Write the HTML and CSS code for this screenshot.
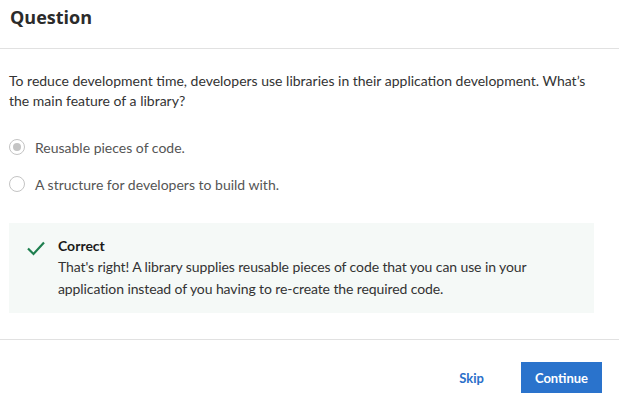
FILE: index.html
```html
<!DOCTYPE html>
<html>
<head>
<meta charset="utf-8">
<link rel="stylesheet" href="styles.css">
</head>
<body>
<div class="dialog">
  <header class="head"><h1 class="title">Question</h1></header>
  <main class="body">
    <p class="prompt">To reduce development time, developers use libraries in their application development. What’s the main feature of a library?</p>
    <div class="options">
      <label class="option selected"><span class="radio"><span class="dot"></span></span><span class="opt-text">Reusable pieces of code.</span></label>
      <label class="option"><span class="radio"></span><span class="opt-text">A structure for developers to build with.</span></label>
    </div>
    <div class="feedback">
      <svg class="check" width="18" height="15" viewBox="0 0 18 15"><path d="M1 7.5 L6.5 13 L17 1.5" fill="none" stroke="#1e7f4f" stroke-width="2.2"/></svg>
      <div class="fb-text">
        <div class="fb-title">Correct</div>
        <div class="fb-body">That's right! A library supplies reusable pieces of code that you can use in your application instead of you having to re-create the required code.</div>
      </div>
    </div>
  </main>
  <footer class="foot">
    <button class="btn-skip">Skip</button>
    <button class="btn-continue">Continue</button>
  </footer>
</div>
</body>
</html>
```
FILE: styles.css
```css
html, body { margin: 0; padding: 0; background: #fff; }
body { font-family: Lato, "Noto Sans", sans-serif; color: #333; }
.dialog { width: 619px; height: 401px; display: flex; flex-direction: column; }
.head { height: 48px; border-bottom: 1px solid #e1e1e1; display: flex; align-items: center; padding: 0 10px; box-sizing: content-box; }
.title { margin: 0; margin-top: -14px; font-family: "Open Sans", sans-serif; font-weight: 700; font-size: 18px; color: #2b2b2b; }
.body { padding: 22px 9px 0 9px; flex: 1; }
.prompt { margin: 0; font-size: 14px; line-height: 20px; color: #333; max-width: 590px; }
.options { margin-top: 26px; display: flex; flex-direction: column; gap: 17px; }
.option { display: flex; align-items: center; gap: 10px; font-size: 14px; color: #555; height: 20px; }
.radio { width: 14px; height: 14px; border: 1.5px solid #c4c4c4; border-radius: 50%; display: flex; align-items: center; justify-content: center; }
.dot { width: 8px; height: 8px; border-radius: 50%; background: #c4c4c4; }
.feedback { margin-top: 29px; background: #f5f9f7; height: 90px; width: 585px; display: flex; align-items: flex-start; padding: 14px 0 0 18px; box-sizing: border-box; }
.check { margin-top: 4px; margin-right: 13px; }
.fb-title { font-weight: 700; font-size: 14px; color: #1a1a1a; line-height: 18px; }
.fb-body { font-size: 14px; line-height: 22px; color: #333; width: 500px; margin-top: 1px; letter-spacing: -0.1px; }
.foot { height: 62px; border-top: 1px solid #e1e1e1; display: flex; align-items: flex-start; justify-content: flex-end; padding: 22px 17px 0 0; box-sizing: border-box; gap: 37px; }
.btn-skip { background: none; border: none; font-family: Lato, sans-serif; font-weight: 700; font-size: 13px; color: #2a6fc9; padding: 0; height: 31px; }
.btn-continue { background: #2a73cc; border: none; color: #fff; font-family: Lato, sans-serif; font-weight: 700; font-size: 13px; width: 81px; height: 31px; }
```
